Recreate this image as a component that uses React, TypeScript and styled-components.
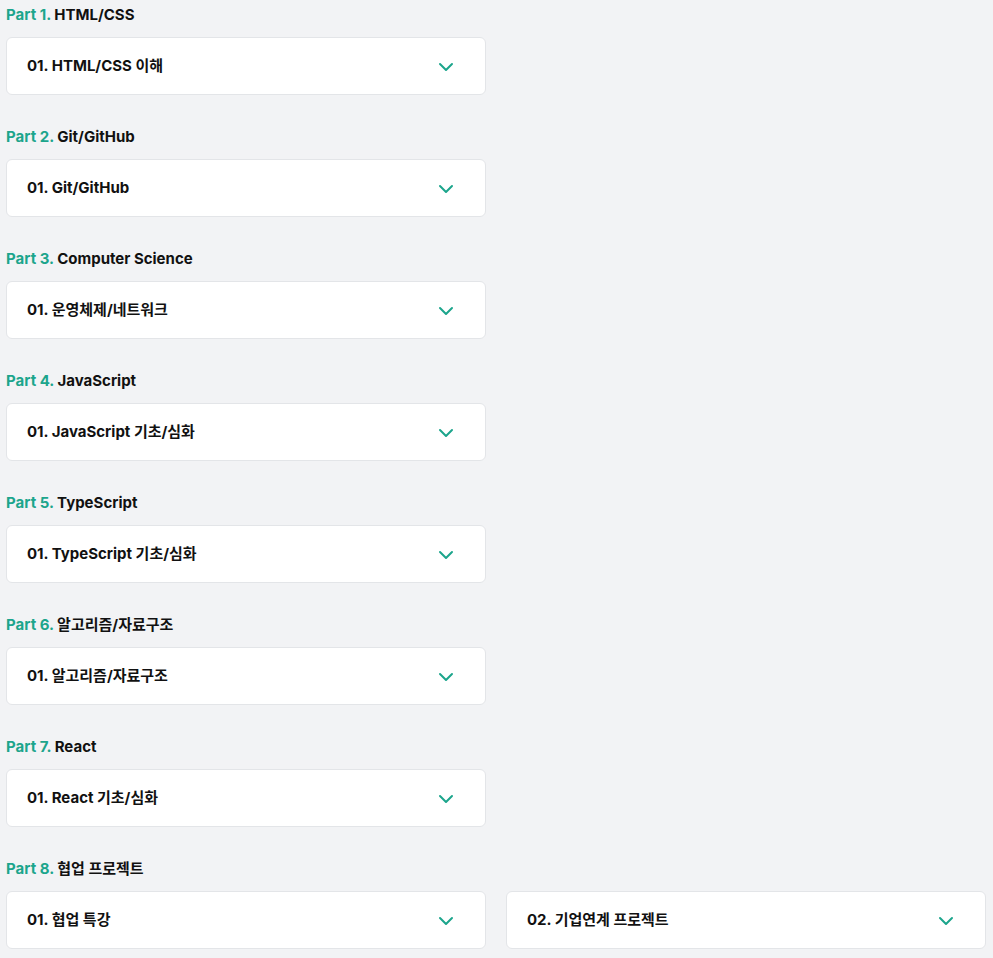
import React from "react";
import styled, { createGlobalStyle } from "styled-components";

const Global = createGlobalStyle`
  html, body { margin: 0; padding: 0; background: #f2f3f5; }
  body { font-family: Inter, "Noto Sans CJK KR", sans-serif; color: #111; }
`;

const Page = styled.div`
  padding: 4px 7px 10px 6px;
  display: flex;
  flex-direction: column;
  gap: 31px;
`;

const Section = styled.section`
  display: flex;
  flex-direction: column;
  gap: 12px;
`;

const Title = styled.h3`
  margin: 0;
  padding-top: 1px;
  font-size: 15px;
  line-height: 20px;
  font-weight: 700;
  color: #111;
`;

const PartNo = styled.span`
  color: #1ca58c;
`;

const Grid = styled.div`
  display: grid;
  grid-template-columns: 480px 480px;
  gap: 20px;
`;

const Card = styled.button`
  box-sizing: border-box;
  height: 58px;
  display: flex;
  align-items: center;
  justify-content: space-between;
  padding: 0 31px 1px 20px;
  background: #fff;
  border: 1px solid #e3e5e8;
  border-radius: 6px;
  font-family: inherit;
  font-size: 15px;
  line-height: 20px;
  font-weight: 700;
  color: #111;
  cursor: pointer;
  text-align: left;
`;

const Label = styled.span`
  display: block;
  line-height: 20px;
`;

const Icon = styled.svg`
  margin-top: 2px;
`;

const Chevron = () => (
  <Icon width="16" height="10" viewBox="0 0 16 10" fill="none">
    <path d="M2 2l6 6 6-6" stroke="#1ca58c" strokeWidth="2" strokeLinecap="round" strokeLinejoin="round" />
  </Icon>
);

const parts: { no: number; name: string; items: string[] }[] = [
  { no: 1, name: "HTML/CSS", items: ["01. HTML/CSS 이해"] },
  { no: 2, name: "Git/GitHub", items: ["01. Git/GitHub"] },
  { no: 3, name: "Computer Science", items: ["01. 운영체제/네트워크"] },
  { no: 4, name: "JavaScript", items: ["01. JavaScript 기초/심화"] },
  { no: 5, name: "TypeScript", items: ["01. TypeScript 기초/심화"] },
  { no: 6, name: "알고리즘/자료구조", items: ["01. 알고리즘/자료구조"] },
  { no: 7, name: "React", items: ["01. React 기초/심화"] },
  { no: 8, name: "협업 프로젝트", items: ["01. 협업 특강", "02. 기업연계 프로젝트"] },
];

export default function App() {
  return (
    <>
      <Global />
      <Page>
        {parts.map((p) => (
          <Section key={p.no}>
            <Title>
              <PartNo>Part {p.no}.</PartNo> {p.name}
            </Title>
            <Grid>
              {p.items.map((it) => (
                <Card key={it}>
                  <Label>{it}</Label>
                  <Chevron />
                </Card>
              ))}
            </Grid>
          </Section>
        ))}
      </Page>
    </>
  );
}
